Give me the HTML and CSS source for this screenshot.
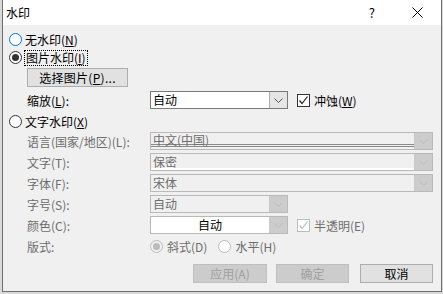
FILE: index.html
```html
<!DOCTYPE html>
<html lang="zh-CN">
<head>
  <meta charset="UTF-8">
  <title>水印</title>
  <link rel="stylesheet" href="styles.css">
</head>
<body>
  <div class="window">
    <div class="titlebar">
      <span class="title">水印</span>
      <span class="help">?</span>
      <span class="close">
        <svg width="11" height="11" viewBox="0 0 11 11"><path d="M0.5 0.5 L10.5 10.5 M10.5 0.5 L0.5 10.5" stroke="#000" stroke-width="1" fill="none"/></svg>
      </span>
    </div>
    <div class="content">
      <div class="option row-none"><span class="radio hover"></span>无水印(<u>N</u>)</div>
      <div class="option row-pic"><span class="radio checked"></span><span class="focus">图片水印(<u>I</u>)</span></div>
      <div class="row-pick"><button class="btn pick">选择图片(<u>P</u>)...</button></div>

      <div class="field row-scale">
        <span class="lbl">缩放(<u>L</u>):</span>
        <div class="combo short">
          <span class="val">自动</span>
          <span class="arrow"><svg width="9" height="5" viewBox="0 0 9 5"><polyline points="0.5,0.5 4.5,4.5 8.5,0.5" stroke="#555" fill="none"/></svg></span>
        </div>
        <span class="check on"><svg width="11" height="11" viewBox="0 0 11 11"><polyline points="1.5,5.5 4,8.5 9.5,1.5" stroke="#222" stroke-width="1.2" fill="none"/></svg></span>
        <span class="check-label">冲蚀(<u>W</u>)</span>
      </div>

      <div class="option row-text"><span class="radio"></span>文字水印(<u>X</u>)</div>

      <div class="field row-lang off">
        <span class="lbl">语言(国家/地区)(L):</span>
        <div class="combo long lang">
          <span class="val">中文(中国)</span>
          <span class="arrow"><svg width="9" height="5" viewBox="0 0 9 5"><polyline points="0.5,0.5 4.5,4.5 8.5,0.5" stroke="#bdbdbd" fill="none"/></svg></span>
        </div>
      </div>
      <div class="field row-gap off">
        <span class="lbl">文字(T):</span>
        <div class="combo long lit">
          <span class="val">保密</span>
          <span class="arrow"><svg width="9" height="5" viewBox="0 0 9 5"><polyline points="0.5,0.5 4.5,4.5 8.5,0.5" stroke="#bdbdbd" fill="none"/></svg></span>
        </div>
      </div>
      <div class="field row-gap off">
        <span class="lbl">字体(F):</span>
        <div class="combo long">
          <span class="val">宋体</span>
          <span class="arrow"><svg width="9" height="5" viewBox="0 0 9 5"><polyline points="0.5,0.5 4.5,4.5 8.5,0.5" stroke="#bdbdbd" fill="none"/></svg></span>
        </div>
      </div>
      <div class="field row-gap off">
        <span class="lbl">字号(S):</span>
        <div class="combo short">
          <span class="val">自动</span>
          <span class="arrow"><svg width="9" height="5" viewBox="0 0 9 5"><polyline points="0.5,0.5 4.5,4.5 8.5,0.5" stroke="#bdbdbd" fill="none"/></svg></span>
        </div>
      </div>
      <div class="field row-gap off">
        <span class="lbl">颜色(C):</span>
        <div class="combo short white">
          <span class="val center">自动</span>
          <span class="arrow"><svg width="9" height="5" viewBox="0 0 9 5"><polyline points="0.5,0.5 4.5,4.5 8.5,0.5" stroke="#bdbdbd" fill="none"/></svg></span>
        </div>
        <span class="check on dim"><svg width="11" height="11" viewBox="0 0 11 11"><polyline points="1.5,5.5 4,8.5 9.5,1.5" stroke="#bcbcbc" stroke-width="1.2" fill="none"/></svg></span>
        <span class="check-label">半透明(E)</span>
      </div>
      <div class="field row-layout off">
        <span class="lbl">版式:</span>
        <span class="radio checked dim"></span><span class="opt">斜式(D)</span>
        <span class="radio dim white"></span><span class="opt">水平(H)</span>
      </div>

      <div class="actions">
        <button class="btn act apply" disabled>应用(A)</button>
        <button class="btn act ok" disabled>确定</button>
        <button class="btn act cancel">取消</button>
      </div>
    </div>
  </div>
</body>
</html>
```

FILE: styles.css
```css
html, body { margin: 0; padding: 0; }
body { background: #d9d9d9; width: 443px; height: 294px; overflow: hidden; font-family: "Noto Sans CJK SC", "Microsoft YaHei", sans-serif; font-size: 12px; color: #000; }
u { text-decoration: underline; text-underline-offset: 1px; }

.window { margin-left: 2px; width: 438px; height: 291px; background: #f0f0f0; border: 1px solid #6f6f6f; border-top: none; }
.titlebar { height: 25px; background: #fff; display: flex; align-items: center; }
.title { margin-left: 3px; font-size: 12px; }
.help { margin-left: auto; margin-right: 37px; font-size: 13px; }
.close { margin-right: 18px; display: flex; }

.content { display: flex; flex-direction: column; }
.option { display: flex; align-items: center; height: 13px; line-height: 13px; padding-left: 6px; }
.radio { width: 11px; height: 11px; border: 1px solid #333; border-radius: 50%; background: #fff; margin-right: 3px; position: relative; flex: none; }
.radio.hover { border-color: #0078d7; }
.radio.checked::after { content: ""; position: absolute; left: 2px; top: 2px; width: 7px; height: 7px; border-radius: 50%; background: #333; }
.radio.dim { border-color: #bcbcbc; background: #f0f0f0; }
.radio.dim.white { background: #fff; }
.radio.checked.dim::after { background: #bcbcbc; }

.row-none { margin-top: 8px; }
.row-pic { margin-top: 4px; height: 15px; }
.focus { outline: 1px dotted #000; outline-offset: 0; padding: 0 1px; line-height: 14px; }
.row-pick { margin-top: 3px; padding-left: 24px; }
.btn { font-family: inherit; font-size: 12px; height: 19px; padding: 0; background: #e1e1e1; border: 1px solid #adadad; color: #000; line-height: 16px; }
.pick { width: 101px; letter-spacing: 0.3px; }

.field { display: flex; align-items: center; height: 18px; padding-left: 24px; }
.lbl { width: 123px; flex: none; }
.off .lbl, .off .check-label, .off .opt { color: #6d6d6d; }
.row-scale { margin-top: 4px; }
.row-lang { margin-top: 4px; }
.row-gap { margin-top: 3px; }
.row-layout { margin-top: 6px; height: 13px; }
.row-text { margin-top: 6px; }

.combo { height: 18px; box-sizing: border-box; border: 1px solid #b9b9b9; background: #f0f0f0; display: flex; color: #6d6d6d; }
.combo.short { width: 138px; }
.combo.long { width: 283px; }
.combo .val { flex: 1; padding-left: 2px; line-height: 16px; }
.combo .val.center { text-align: center; padding-left: 0; }
.combo .arrow { width: 17px; flex: none; border-left: 1px solid #c8c8c8; background: #cccccc; display: flex; align-items: center; justify-content: center; }
.combo.white { background: #fff; color: #000; }
.combo.lit { box-shadow: inset 0 -2px 0 #fff; }
.combo.lang .val { border-bottom: 3px double #8a8a8a; margin-bottom: 2px; line-height: 13px; }
.row-scale .combo { background: #fff; color: #000; border-color: #7a7a7a; }
.row-scale .combo .arrow { background: #e5e5e5; border-left-color: #adadad; }

.check { width: 11px; height: 11px; border: 1px solid #333; background: #fff; margin-left: 9px; margin-right: 4px; display: flex; align-items: center; justify-content: center; flex: none; }
.check.dim { border-color: #bcbcbc; }

.opt { margin-left: 1px; }
.row-layout .radio { margin-right: 3px; }
.row-layout .opt:nth-of-type(2) { }
.row-layout .radio.white { margin-left: 11px; }

.actions { display: flex; justify-content: flex-end; margin-top: 11px; padding-right: 8px; }
.act { width: 74px; }
.apply { margin-right: 9px; }
.ok { width: 73px; margin-right: 11px; }
.cancel { width: 73px; }
.btn:disabled { background: #cccccc; border-color: #bfbfbf; color: #a0a0a0; }
```
